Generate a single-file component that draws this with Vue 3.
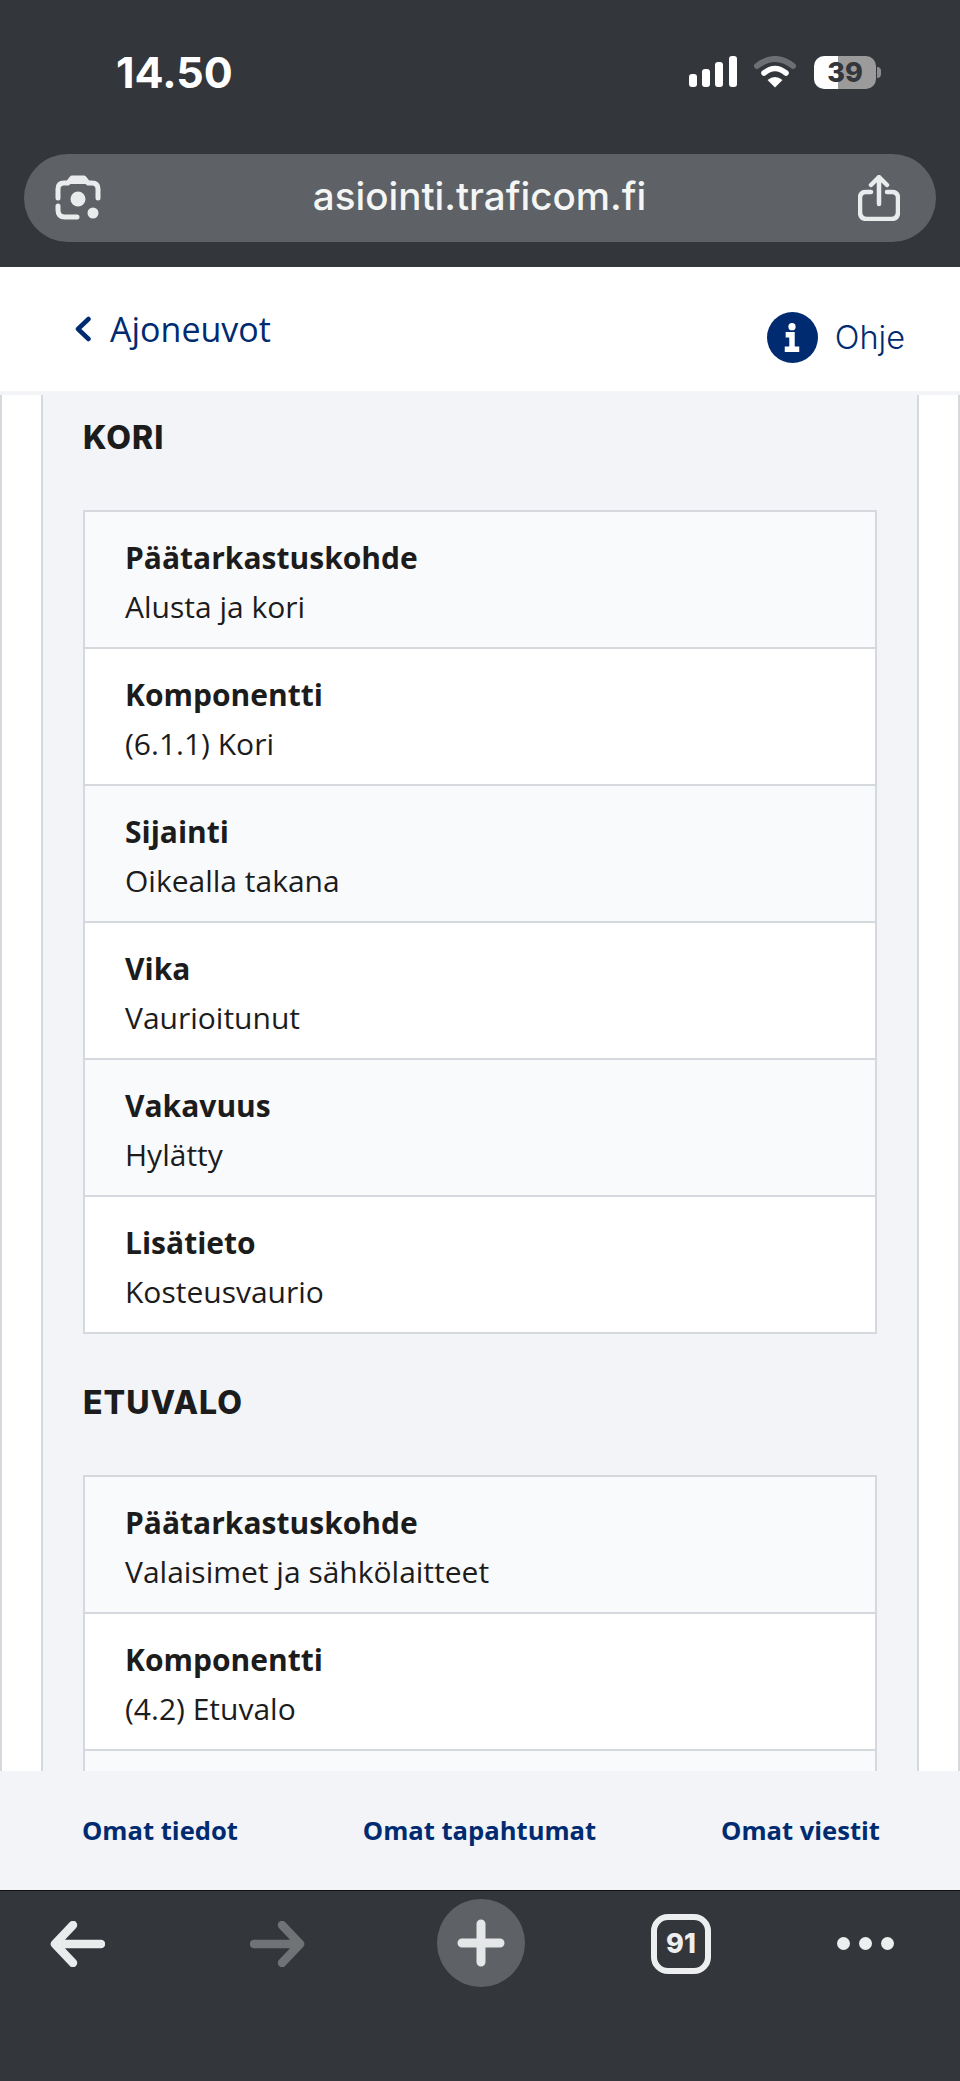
<script setup>
const sections = [
  {
    title: 'KORI',
    rows: [
      ['Päätarkastuskohde', 'Alusta ja kori'],
      ['Komponentti', '(6.1.1) Kori'],
      ['Sijainti', 'Oikealla takana'],
      ['Vika', 'Vaurioitunut'],
      ['Vakavuus', 'Hylätty'],
      ['Lisätieto', 'Kosteusvaurio'],
    ],
  },
  {
    title: 'ETUVALO',
    rows: [
      ['Päätarkastuskohde', 'Valaisimet ja sähkölaitteet'],
      ['Komponentti', '(4.2) Etuvalo'],
      [], // scrolled under the footer, only its top edge shows
    ],
  },
]

const footerLinks = ['Omat tiedot', 'Omat tapahtumat', 'Omat viestit']
</script>

<template>
  <div class="phone">
    <div class="chrome-top">
      <div class="status">
        <span class="time">14.50</span>
        <div class="status-icons">
          <svg class="signal" width="48" height="32" viewBox="0 0 48 32">
            <rect x="0" y="18" width="8" height="13" rx="3" />
            <rect x="13" y="13" width="8" height="18" rx="3" />
            <rect x="26" y="6" width="8" height="25" rx="3" />
            <rect x="40" y="0" width="8" height="31" rx="3" />
          </svg>
          <svg class="wifi" width="42" height="32" viewBox="0 0 42 32">
            <path d="M3 10 Q21 -4 39 10" fill="none" stroke="#6d7073" stroke-width="6" stroke-linecap="round" />
            <path d="M10 17 Q21 8 32 17" fill="none" stroke="#fff" stroke-width="5.5" stroke-linecap="round" />
            <path d="M13.5 24 Q21 18 28.5 24 L21 31.5 Z" fill="#fff" />
          </svg>
          <div class="battery">
            <span class="battery-body">39</span>
            <span class="battery-nub"></span>
          </div>
        </div>
      </div>
      <div class="urlbar">
        <svg class="lens" width="46" height="46" viewBox="0 0 46 46" fill="none" stroke="#e9ebed" stroke-width="5" stroke-linecap="round">
          <path d="M3 23 V14 Q3 8 9 8 H13 L17 3 H29 L33 8 H37 Q43 8 43 14 V23" stroke-linejoin="round" />
          <path d="M14 3.5 H32 L36 9 H10 Z" fill="#e9ebed" stroke="none" />
          <path d="M3 31 V35 Q3 42 10 42 H22" />
          <circle cx="23" cy="24" r="7.5" fill="#e9ebed" stroke="none" />
          <circle cx="38" cy="38" r="5.5" fill="#e9ebed" stroke="none" />
        </svg>
        <span class="url">asiointi.traficom.fi</span>
        <svg class="share" width="42" height="46" viewBox="0 0 42 46" fill="none" stroke="#e9ebed" stroke-width="4.5" stroke-linecap="round" stroke-linejoin="round">
          <path d="M13 17 H8 Q2 17 2 23 V37 Q2 44 9 44 H33 Q40 44 40 37 V23 Q40 17 34 17 H29" />
          <path d="M21 29 V3 M13 10 L21 2 L29 10" />
        </svg>
      </div>
    </div>

    <header class="nav">
      <a class="back">
        <svg width="18" height="26" viewBox="0 0 18 26" fill="none" stroke="#002b71" stroke-width="4.5" stroke-linecap="round" stroke-linejoin="round">
          <path d="M14.5 3 L4 13 L14.5 23" />
        </svg>
        <span>Ajoneuvot</span>
      </a>
      <a class="help">
        <span class="help-dot">
          <svg width="20" height="32" viewBox="0 0 20 32" fill="#fff">
            <circle cx="10" cy="4" r="4" />
            <path d="M3 10 H13 V26 H18 V32 H2 V26 H7 V16 H3 Z" />
          </svg>
        </span>
        <span>Ohje</span>
      </a>
    </header>

    <main class="scroller">
      <div class="rail">
        <div class="panel">
          <section v-for="section in sections" :key="section.title" class="section">
            <h2>{{ section.title }}</h2>
            <dl class="table">
              <div v-for="(row, i) in section.rows" :key="i" class="row">
                <template v-if="row.length">
                  <dt>{{ row[0] }}</dt>
                  <dd>{{ row[1] }}</dd>
                </template>
              </div>
            </dl>
          </section>
        </div>
      </div>
    </main>

    <nav class="footer">
      <a v-for="link in footerLinks" :key="link">{{ link }}</a>
    </nav>

    <div class="chrome-bottom">
      <svg class="tool t-back" width="56" height="46" viewBox="0 0 56 46" fill="none" stroke="#e9ebed" stroke-width="8.5" stroke-linecap="round" stroke-linejoin="round">
        <path d="M52 23 H6 M24 4 L6 23 L24 42" />
      </svg>
      <svg class="tool t-forward" width="56" height="46" viewBox="0 0 56 46" fill="none" stroke="#707376" stroke-width="8.5" stroke-linecap="round" stroke-linejoin="round">
        <path d="M4 23 H50 M32 4 L50 23 L32 42" />
      </svg>
      <div class="tool t-new">
        <svg width="48" height="48" viewBox="0 0 48 48" stroke="#e4e6e8" stroke-width="9" stroke-linecap="round">
          <path d="M24 5 V43 M5 24 H43" />
        </svg>
      </div>
      <div class="tool t-tabs">91</div>
      <div class="tool t-more">
        <i></i><i></i><i></i>
      </div>
    </div>
  </div>
</template>

<style scoped>
.phone {
  display: flex;
  flex-direction: column;
  width: 960px;
  height: 2081px;
  overflow: hidden;
  background: #fff;
  font-family: "Open Sans", "Liberation Sans", sans-serif;
  color: #1c1c1c;
}

.chrome-top {
  height: 267px;
  flex: none;
  padding: 52px 24px 0;
  box-sizing: border-box;
  background: #33363a;
}

.status {
  display: flex;
  align-items: center;
  justify-content: space-between;
  height: 40px;
  padding: 0 55px 0 92px;
}

.time {
  color: #fff;
  font-family: Inter, sans-serif;
  font-size: 43px;
  font-weight: 700;
  line-height: 40px;
}

.status-icons {
  display: flex;
  align-items: center;
  gap: 17px;
}

.signal {
  fill: #fff;
}

.battery {
  display: flex;
  align-items: center;
  gap: 1px;
  margin-left: 1px;
}

.battery-body {
  width: 62px;
  height: 33px;
  border-radius: 10px;
  background: linear-gradient(90deg, #fff 39%, #9b9b9c 39%);
  color: #33363a;
  font-family: Inter, sans-serif;
  font-size: 27px;
  font-weight: 800;
  line-height: 33px;
  text-align: center;
}

.battery-nub {
  width: 4px;
  height: 11px;
  border-radius: 0 4px 4px 0;
  background: #8d8e90;
}

.urlbar {
  display: flex;
  align-items: center;
  justify-content: space-between;
  height: 88px;
  margin-top: 62px;
  padding: 0 36px 0 31px;
  border-radius: 44px;
  background: #5e6266;
}

.url {
  margin-bottom: 4px;
  color: #f4f5f5;
  font-family: Inter, sans-serif;
  font-size: 38.6px;
  font-weight: 500;
}

.nav {
  display: flex;
  justify-content: space-between;
  flex: none;
  height: 124px;
  padding: 0 55px 0 74px;
  box-sizing: border-box;
  color: #002b71;
}

.back {
  display: flex;
  align-items: center;
  gap: 18px;
  height: 124px;
  font-size: 34px;
}

.help {
  display: flex;
  align-items: center;
  gap: 17px;
  padding-top: 45px;
  height: 51px;
  font-family: Inter, sans-serif;
  font-size: 32.5px;
  font-weight: 300;
}

.help-dot {
  display: flex;
  align-items: center;
  justify-content: center;
  width: 51px;
  height: 51px;
  border-radius: 50%;
  background: #002b71;
}

.help-dot svg {
  height: 29px;
}

.scroller {
  flex: 1;
  min-height: 0;
  overflow: hidden;
  box-shadow: inset 0 4px 0 #f2f4f8;
}

.rail {
  margin: 4px 0 0;
  padding: 0 39px;
  border-left: 2px solid #d5d8dd;
  border-right: 2px solid #d5d8dd;
}

.panel {
  padding: 0 40px;
  border-left: 2px solid #d5d8dd;
  border-right: 2px solid #d5d8dd;
  background: #f2f4f8;
}

.section h2 {
  margin: 0;
  padding: 23px 0 52px;
  font-family: Inter, sans-serif;
  font-size: 32px;
  font-weight: 800;
  line-height: 40px;
  letter-spacing: 1px;
}

.section + .section h2 {
  padding-top: 49px;
}

.table {
  margin: 0;
  border: 2px solid #d5d8dd;
  border-bottom: 0;
}

.row {
  box-sizing: border-box;
  height: 137px;
  padding: 21px 40px 0;
  border-bottom: 2px solid #d5d8dd;
  background: #fff;
}

.row:nth-child(odd) {
  background: #f9fafc;
}

.row dt {
  font-size: 30px;
  font-weight: 700;
  line-height: 49px;
}

.row dd {
  margin: 0;
  font-size: 30px;
  line-height: 49px;
}

.footer {
  display: flex;
  align-items: center;
  justify-content: space-between;
  flex: none;
  height: 119px;
  padding: 0 80px 0 82px;
  box-sizing: border-box;
  background: #f2f4f8;
  color: #002b71;
  font-size: 25.6px;
  font-weight: 700;
}

.chrome-bottom {
  display: flex;
  align-items: flex-start;
  flex: none;
  height: 191px;
  border-top: 1px solid #111;
  box-sizing: border-box;
  background: #33363a;
}

.tool {
  flex: none;
}

.t-back {
  margin: 30px 0 0 49px;
}

.t-forward {
  margin: 30px 0 0 145px;
}

.t-new {
  display: flex;
  align-items: center;
  justify-content: center;
  width: 88px;
  height: 88px;
  margin: 8px 0 0 131px;
  border-radius: 50%;
  background: #5e6266;
}

.t-tabs {
  width: 60px;
  height: 60px;
  margin: 23px 0 0 126px;
  border: 6px solid #eceeef;
  border-radius: 17px;
  box-sizing: border-box;
  color: #eceeef;
  font-family: Inter, sans-serif;
  font-size: 27px;
  font-weight: 800;
  line-height: 47px;
  text-align: center;
}

.t-more {
  display: flex;
  gap: 9px;
  margin: 46px 0 0 126px;
}

.t-more i {
  width: 13px;
  height: 13px;
  border-radius: 50%;
  background: #eceeef;
}
</style>
